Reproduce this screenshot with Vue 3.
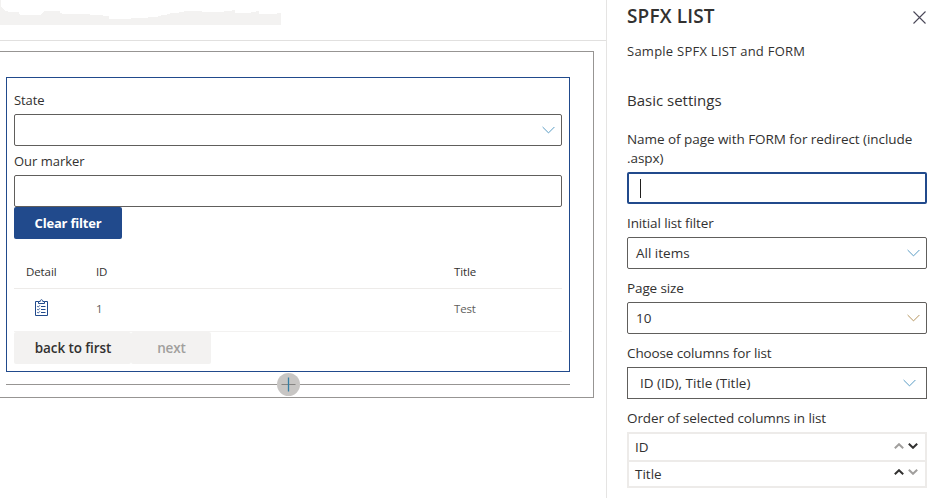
<script setup>
import { ref } from 'vue'

const rows = [{ id: 1, title: 'Test' }]
const pickers = [
  { label: 'Initial list filter', value: 'All items', kind: 'filter' },
  { label: 'Page size', value: '10', kind: 'size' },
  { label: 'Choose columns for list', value: 'ID (ID), Title (Title)', kind: 'columns' }
]
const order = ref(['ID', 'Title'])
const formPage = ref('')
function move(i, step) {
  const list = [...order.value]
  const [item] = list.splice(i, 1)
  list.splice(i + step, 0, item)
  order.value = list
}
</script>

<template>
  <div class="app">
    <main class="canvas">
      <header class="topbar">
        <svg width="281" height="25" viewBox="0 0 281 25" shape-rendering="crispEdges">
          <path fill="#f3f2f1" d="M0 0H1V7L3 9L6 11L9 12H19V14L21 15H41V14L44 12V11H60V13L63 14H90V15H103V16H109V19H131V18H148V17H158V16L163 15L170 14V13H176L187 11H202V12H224V11H232V10H235V13H251V12H256V11H259V14H277V13H281V25H0Z" />
        </svg>
      </header>
      <section class="zone">
        <div class="webpart">
          <label class="flabel state">State</label>
          <div class="box select">
            <svg class="chev" width="13" height="8" viewBox="0 0 13 8"><path d="M.6 1L6.5 6.9L12.4 1" /></svg>
          </div>
          <label class="flabel marker">Our marker</label>
          <div class="box"></div>
          <button class="primary"><span>Clear filter</span></button>
          <div class="row head"><span>Detail</span><span>ID</span><span>Title</span></div>
          <div v-for="r in rows" :key="r.id" class="row item">
            <span class="icon">
              <svg width="13" height="17" viewBox="0 0 13 17" fill="none" stroke="#214a8c">
                <path d="M3.5 2.5H.5V16.5H12.5V2.5H9.5" />
                <path d="M3.5 4.5V2.5H5.2C5.2 .1 7.8 .1 7.8 2.5H9.5V4.5Z" />
                <path d="M6 7.5H10.5M6 10.5H10.5M6 13.5H10.5" />
                <path stroke-width=".9" d="M2.2 7.2L3.2 8.1L4.9 6.3M2.2 10.2L3.2 11.1L4.9 9.3M2.2 13.2L3.2 14.1L4.9 12.3" />
              </svg>
            </span>
            <span>{{ r.id }}</span><span>{{ r.title }}</span>
          </div>
          <div class="pager">
            <button class="first">back to first</button><button class="next" disabled>next</button>
          </div>
        </div>
        <div class="adder">
          <i></i>
          <button>
            <svg width="23" height="23" viewBox="0 0 23 23"><circle cx="11.5" cy="11.5" r="11.5" fill="#c8c6c4" /><path d="M4.5 11.5H18.5" stroke="#858381" /><path d="M11.5 4.5V18.5" stroke="#347fa5" stroke-width="1.3" /></svg>
          </button>
          <i></i>
        </div>
      </section>
    </main>
    <aside class="pane">
      <div class="titlebar">
        <h1>SPFX LIST</h1>
        <svg width="13" height="13" viewBox="0 0 13 13"><path d="M.5 .5L12.5 12.5M12.5 .5L.5 12.5" stroke="#4a4858" stroke-width="1.1" /></svg>
      </div>
      <p class="desc">Sample SPFX LIST and FORM</p>
      <h2>Basic settings</h2>
      <label class="long"><span>Name of page with FORM for redirect (include</span><br><span>.aspx)</span></label>
      <div class="focus"><i class="caret"></i>{{ formPage }}</div>
      <template v-for="p in pickers" :key="p.kind">
        <label class="plabel">{{ p.label }}</label>
        <div class="box select" :class="p.kind">
          <span>{{ p.value }}</span>
          <svg class="chev" width="13" height="8" viewBox="0 0 13 8"><path d="M.6 1L6.5 6.9L12.4 1" /></svg>
        </div>
      </template>
      <label class="plabel">Order of selected columns in list</label>
      <ul>
        <li v-for="(c, i) in order" :key="c">
          <span>{{ c }}</span>
          <svg :class="{ off: i === 0 }" width="10" height="6" viewBox="0 0 10 6" @click="i > 0 && move(i, -1)"><path d="M.8 5.2L5 1.2L9.2 5.2" /></svg>
          <svg :class="{ off: i === order.length - 1 }" width="10" height="6" viewBox="0 0 10 6" @click="i < order.length - 1 && move(i, 1)"><path d="M.8 .8L5 4.8L9.2 .8" /></svg>
        </li>
      </ul>
    </aside>
  </div>
</template>

<style>
body { margin: 0; background: #fff; overflow: hidden; }
</style>
<style scoped>
* { box-sizing: border-box; }
.app { display: flex; width: 941px; height: 499px; font: 13.5px/19px "Open Sans", "Noto Sans", sans-serif; color: #323130; white-space: nowrap; }
button { border: 0; padding: 0; font: inherit; display: block; }
svg { display: block; flex: none; }
.canvas { width: 607px; height: 498px; border-right: 1px solid #e5e4e3; }
.topbar { height: 41px; border-bottom: 1px solid #e1e0df; }
.zone { margin-top: 10px; width: 594px; height: 347px; border: 1px solid #979593; border-left: 0; padding: 25px 23px 0 6px; }
.webpart { height: 295px; border: 1px solid #214a8c; padding: 0 7px; }
.flabel { display: block; font-size: 13px; }
.state { height: 36px; padding-top: 13px; letter-spacing: -.1px; }
.marker { height: 29px; padding-top: 6px; letter-spacing: -.02px; }
.box { height: 32px; border: 1px solid #605e5c; border-radius: 2px; display: flex; align-items: center; }
.chev { margin-left: auto; margin-right: 6px; fill: none; stroke: #5a9cc4; }
.primary { width: 108px; height: 32px; background: #214a8c; border-radius: 2px; color: #fff; font-weight: 700; font-size: 13px; letter-spacing: -.2px; }
.row { display: grid; grid-template-columns: 70px 358px 1fr; padding-left: 12px; align-items: center; font-size: 11.5px; border-bottom: 1px solid #edebe9; }
.head { height: 50px; padding-top: 15px; letter-spacing: -.1px; }
.item { height: 43px; color: #605e5c; border-color: #f3f2f1; padding-bottom: 4px; letter-spacing: -.2px; }
.icon { padding-left: 9px; padding-bottom: 2px; }
.pager { display: flex; }
.pager button { height: 32px; border-radius: 2px; background: #f3f2f1; color: #323130; font-weight: 600; font-size: 13.5px; letter-spacing: -.1px; }
.pager .first { width: 117px; padding-left: 1px; }
.pager .next { width: 80px; color: #a19f9d; padding-left: 1px; }
.adder { display: flex; align-items: center; height: 25px; }
.adder i { flex: 1; height: 1px; background: #979593; }
.adder button { background: none; }
.pane { width: 334px; padding-left: 20px; padding-right: 14px; }
.titlebar { display: flex; height: 34px; justify-content: space-between; padding: 3px 1px 0 0; }
.titlebar svg { margin-top: 8px; }
h1 { margin: 0; font-size: 19px; line-height: 26px; font-weight: 600; letter-spacing: .15px; }
.desc { margin: 0; height: 36px; padding-top: 8px; font-size: 13px; letter-spacing: .25px; }
h2 { margin: 0; height: 60px; padding-top: 20px; font-size: 15px; line-height: 20px; font-weight: 400; }
.long { display: block; height: 42px; letter-spacing: -.05px; }
.focus { height: 32px; border: 2px solid #214a8c; border-radius: 2px; display: flex; align-items: center; padding-left: 11px; }
.caret { width: 1px; height: 19px; background: #201f1e; }
.plabel { display: block; height: 33px; padding-top: 10px; letter-spacing: -.12px; }
.select span { padding-left: 8px; }
.columns span { padding-left: 12px; }
.size .chev { stroke: #b5955f; }
.columns .chev { margin-right: 10px; }
.columns { border-radius: 0; }
ul { list-style: none; margin: 0; padding: 0; border: 2px solid #edebe9; height: 56px; }
li { height: 26px; display: flex; align-items: center; padding: 1px 7px 0 6px; }
li + li { border-top: 2px solid #edebe9; padding-top: 0; }
li span { flex: 1; }
li svg { margin-left: 4px; margin-top: -4px; fill: none; stroke: #323130; stroke-width: 2; }
li svg.off { stroke: #a19f9d; }
</style>
